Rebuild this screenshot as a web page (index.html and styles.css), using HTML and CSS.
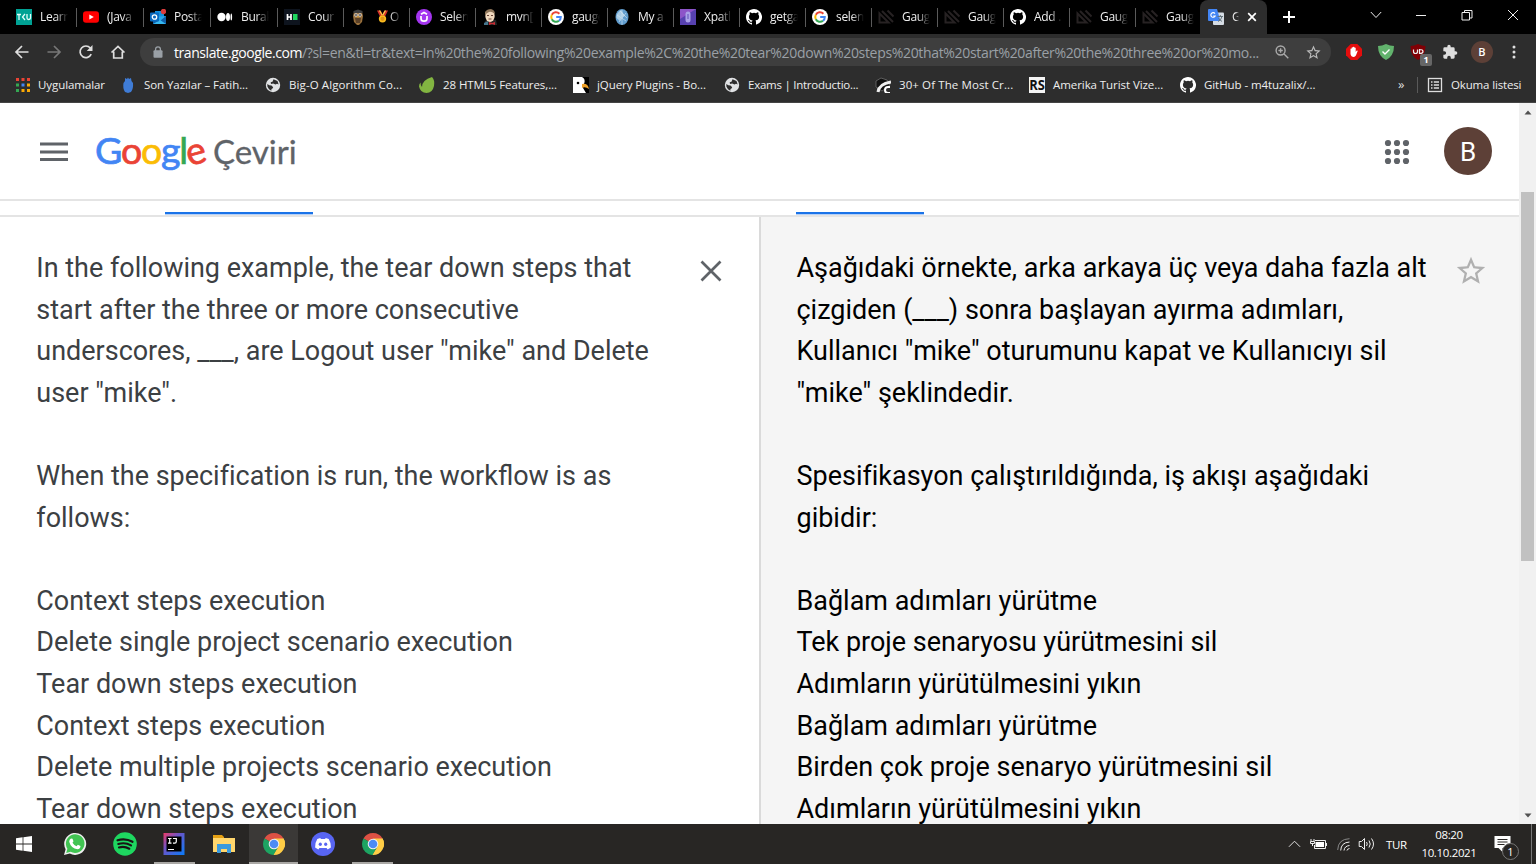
FILE: index.html
```html
<!DOCTYPE html>
<html lang="tr">
<head>
<meta charset="utf-8">
<title>Google Çeviri</title>
<link rel="stylesheet" href="styles.css">
</head>
<body>
<svg class="defs" width="0" height="0" aria-hidden="true">
  <symbol id="github" viewBox="0 0 16 16"><path fill="#fff" d="M8 0C3.58 0 0 3.58 0 8c0 3.54 2.29 6.53 5.47 7.59.4.07.55-.17.55-.38 0-.19-.01-.82-.01-1.49-2.01.37-2.53-.49-2.69-.94-.09-.23-.48-.94-.82-1.13-.28-.15-.68-.52-.01-.53.63-.01 1.08.58 1.23.82.72 1.21 1.87.87 2.33.66.07-.52.28-.87.51-1.07-1.78-.2-3.64-.89-3.64-3.95 0-.87.31-1.59.82-2.15-.08-.2-.36-1.02.08-2.12 0 0 .67-.21 2.2.82a7.6 7.6 0 0 1 4 0c1.53-1.04 2.2-.82 2.2-.82.44 1.1.16 1.92.08 2.12.51.56.82 1.27.82 2.15 0 3.07-1.87 3.75-3.65 3.95.29.25.54.73.54 1.48 0 1.07-.01 1.93-.01 2.2 0 .21.15.46.55.38A8 8 0 0 0 8 0"/></symbol>
  <symbol id="gicon" viewBox="0 0 16 16"><circle cx="8" cy="8" r="8" fill="#fff"/><g fill="none" stroke-width="2"><path stroke="#ea4335" d="M11.4 4.7A4.8 4.8 0 0 0 3.8 5.8"/><path stroke="#fbbc05" d="M3.8 5.8a4.8 4.8 0 0 0 0 4.4"/><path stroke="#34a853" d="M3.8 10.2a4.8 4.8 0 0 0 7.2 1.6"/><path stroke="#4285f4" d="M11 11.8A4.8 4.8 0 0 0 12.8 8H8.2"/></g></symbol>
  <symbol id="gauge" viewBox="0 0 16 16"><path d="M1.500 4.500V13.500H10.500zM4 2l11 11M9.500 1.500l6 6" fill="none" stroke="#272223" stroke-width="2"/></symbol>
  <symbol id="globe" viewBox="0 0 16 16"><circle cx="8" cy="8" r="7.2" fill="#e0e2e4"/><path fill="#2d2d2d" d="M8.500 2.300l4 1.700 1.200 3.500-1.700-.7-1.500.8-2.300-1-2.200.3-.3-1.600 1.800-.5zM2.300 7l2 1.200 2.200.3 1.700 1.700-.7 1.300-1 .5-.2 1.700-2.300-1.500-1.600-2.700z"/></symbol>
  <symbol id="chrome" viewBox="0 0 24 24"><path fill="#dd5144" d="M12 12L2.470 6.500a11 11 0 0 1 19.060 0z"/><path fill="#ffcd46" d="M12 12l9.530-5.500A11 11 0 0 1 12 23l-1-.05L16.500 14.500z"/><path fill="#1da462" d="M12 12l4.300 2.500L11.500 23A11 11 0 0 1 2.470 6.500z"/><path fill="#dd5144" d="M12 6.500h9.530L12 7z"/><path fill="#ffcd46" d="M12 6.500h9.530A11 11 0 0 1 22.500 15L17 12z"/><circle cx="12" cy="12" r="5.300" fill="#f2f2f2"/><circle cx="12" cy="12" r="4.300" fill="#4c8bf5"/></symbol>
  <symbol id="star" viewBox="0 0 24 24"><path d="M22 9.240l-7.190-.62L12 2 9.190 8.630 2 9.240l5.460 4.730L5.820 21 12 17.270 18.180 21l-1.630-7.030zM12 15.400l-3.760 2.270 1-4.280-3.320-2.880 4.380-.38L12 6.100l1.710 4.040 4.380.38-3.320 2.880 1 4.280z"/></symbol>
</svg>

<header class="tabstrip">
  <div class="tabs">
    <div class="tab wide"><svg viewBox="0 0 16 16"><path fill="#00a294" d="M0 0h16v16H0z"/><path stroke="#e4fffb" stroke-width="1.300" fill="none" d="M1 5.500h4M3 5.500V11M9 5L6.500 8 9 11M11 5v4q0 1.500 1.600 1.500T14.500 9V5"/></svg><span>Learn</span></div>
    <div class="tab wide"><svg viewBox="0 0 16 16"><rect y="2.300" width="16" height="11.400" rx="3" fill="#f00"/><path fill="#fff" d="M6.300 5.500v5L10.800 8z"/></svg><span>(Java</span></div>
    <div class="tab wide"><svg viewBox="0 0 16 16"><path fill="#1490df" d="M5 2h9v8H5z"/><path fill="#28a8ea" d="M3 8l13-1v8H3z"/><path fill="#0f5ea8" d="M3 8l7 4 6-5v8H3z"/><path fill="#35b8f1" d="M3 15l7-4 6 4z"/><rect y="3.500" width="9" height="9" rx="1" fill="#0a6abf"/><circle cx="4.500" cy="8" r="2.200" fill="none" stroke="#fff" stroke-width="1.300"/><circle cx="13.500" cy="2.500" r="2.700" fill="#db3c3c"/></svg><span>Posta</span></div>
    <div class="tab wide"><svg viewBox="0 0 16 16" fill="#fff"><circle cx="4.500" cy="8" r="4.200"/><ellipse cx="11" cy="8" rx="2" ry="3.900"/><ellipse cx="14.300" cy="8" rx=".8" ry="3.500"/></svg><span>Burak</span></div>
    <div class="tab"><svg viewBox="0 0 16 16"><path fill="#0e141e" d="M0 0h16v16H0z"/><path d="M3.500 5v6M7 5v6M3.500 8H7" stroke="#fff" stroke-width="1.700"/><path fill="#1ed760" d="M9 5h4.500v6H9z"/></svg><span>Cour</span></div>
    <div class="tab"><svg viewBox="0 0 16 16"><path fill="#9a713d" d="M4 3l4-1 4 1 1 4-1 6-3 3H7l-3-3-1-6z"/><path fill="#3c3c3c" d="M3.500 2L8 .5 12.500 2v2h-9z"/><circle cx="6" cy="6" r="1.700" fill="#ddd"/><circle cx="10" cy="6" r="1.700" fill="#ddd"/><circle cx="6" cy="6" r=".8"/><circle cx="10" cy="6" r=".8"/><path fill="#5b4229" d="M5 9h6l-1 5H6z"/><path fill="#d8a33c" d="M7 7h2l-1 2z"/></svg><span class="medal"><svg viewBox="0 0 12 14"><path fill="#d8322b" d="M0 0h4l2 4 2-4h4L8.500 7h-5z"/><path fill="#f8d04c" d="M2 0h1.500l3 5H5zM10 0H8.500l-3 5H7z"/><circle cx="6" cy="9" r="4" fill="#fbbc1f"/><circle cx="6" cy="9" r="2.300" fill="#df9414"/></svg>O</span></div>
    <div class="tab"><svg viewBox="0 0 16 16"><circle cx="8" cy="8" r="8" fill="#a435f0"/><path fill="none" stroke="#fff" stroke-width="1.700" d="M5 7v2.500a3 2.700 0 0 0 6 0V7M5 5.300l3-1.700 3 1.700"/></svg><span>Selen</span></div>
    <div class="tab"><svg viewBox="0 0 16 16"><path fill="#252525" d="M3 12l5-2 6 1 1 5H2z"/><ellipse cx="8" cy="7" rx="4.700" ry="6" fill="#efd7bd"/><path fill="#8f765b" d="M3 7V3q2-3 6-3 4 1 4 5-4-3-6-2-3 1-4 4z"/><path d="M5 6.500h2M9 6.500h2M6.500 10h3" stroke="#684438"/><path fill="#c92c34" d="M7 13l3 1 3-1v3l-3-1-3 1z"/><path fill="#46768e" d="M2 14l4-2v4H2z"/></svg><span>mvn[</span></div>
    <div class="tab"><svg><use href="#gicon"/></svg><span>gauge</span></div>
    <div class="tab"><svg viewBox="0 0 16 16"><ellipse cx="8" cy="8" rx="6.500" ry="8" fill="#619dce"/><path fill="#a9cce5" d="M7 1Q2 4 2.500 9l3.500 3 2-4 3-1z"/><path d="M3 6l9 6M6 2l7 7M12 4l-7 9M8 1v15" stroke="#d3e6f3" stroke-width=".6"/></svg><span>My a</span></div>
    <div class="tab"><svg viewBox="0 0 16 16"><path fill="#5741b0" d="M0 0h16v16H0z"/><path fill="#8d54c8" d="M0 0h16L0 10z"/><rect x="5.500" y="2.500" width="5" height="11" rx="2.500" fill="#aaa1e8"/><path d="M8 5v5" stroke="#614db7"/></svg><span>Xpatl</span></div>
    <div class="tab"><svg><use href="#github"/></svg><span>getga</span></div>
    <div class="tab"><svg><use href="#gicon"/></svg><span>selen</span></div>
    <div class="tab"><svg><use href="#gauge"/></svg><span>Gaug</span></div>
    <div class="tab"><svg><use href="#gauge"/></svg><span>Gaug</span></div>
    <div class="tab"><svg><use href="#github"/></svg><span>Add .</span></div>
    <div class="tab"><svg><use href="#gauge"/></svg><span>Gaug</span></div>
    <div class="tab last"><svg><use href="#gauge"/></svg><span>Gaug</span></div>
    <div class="tab active"><svg viewBox="0 0 16 16"><rect x="5" y="3.500" width="11" height="12.500" rx="1" fill="#d5dce4"/><path fill="#4285f4" d="M1 0h8l3.500 12H1q-1 0-1-1V1q0-1 1-1z"/><path d="M9.500 7.500H15M12.300 6v1.500M14 7.500q-1 4-4 5M10.500 9.500l3.500 3" stroke="#64747a" fill="none"/><path d="M7 4.600A2.300 2.300 0 1 0 7.200 7H5.200" stroke="#fff" stroke-width="1.100" fill="none"/></svg><span>G</span><svg class="close" viewBox="0 0 10 10"><path d="M1.200 1.200l7.600 7.600M8.800 1.200L1.200 8.800" stroke="#fff" stroke-width="1.700"/></svg></div>
  </div>
  <svg class="plus" viewBox="0 0 12 12"><path d="M6 0v12M0 6h12" stroke="#fff" stroke-width="2"/></svg>
  <div class="window-buttons">
    <svg viewBox="0 0 12 12"><path d="M.8 3L6 8.500 11.200 3"/></svg>
    <svg viewBox="0 0 12 12"><path d="M1 6.500h10"/></svg>
    <svg viewBox="0 0 12 12"><path d="M1 3.500h7.500V11H1zM3.500 3.500v-2H11V9H8.500"/></svg>
    <svg viewBox="0 0 12 12"><path d="M1 1l10 10M11 1L1 11"/></svg>
  </div>
</header>

<div class="toolbar">
  <div class="nav">
    <svg viewBox="0 0 16 16"><path d="M14.500 8H2M8 2L2 8l6 6"/></svg>
    <svg class="dim" viewBox="0 0 16 16"><path d="M1.500 8H14M8 2l6 6-6 6"/></svg>
    <svg viewBox="0 0 16 16"><path d="M13.200 10.200A5.800 5.800 0 1 1 12.300 4l1 1.300"/><path d="M14.500 1v6H8.700z" fill="#dedede" stroke="none"/></svg>
    <svg viewBox="0 0 16 16"><path d="M1.500 8.500L8 2.500l6.500 6M3.700 7.500V14h8.600V7.500"/></svg>
  </div>
  <div class="omnibox">
    <svg class="lock" viewBox="0 0 10 12"><rect x=".5" y="4.200" width="9" height="7.500" rx="1" fill="#9aa0a6"/><path d="M2.600 5V3.200a2.400 2.400 0 0 1 4.800 0V5" fill="none" stroke="#9aa0a6" stroke-width="1.300"/></svg>
    <div class="url"><b>translate.google.com</b>/?sl=en&amp;tl=tr&amp;text=In%20the%20following%20example%2C%20the%20tear%20down%20steps%20that%20start%20after%20the%20three%20or%20mo...</div>
    <svg class="loupe" viewBox="0 0 14 14"><path d="M9 9l4.300 4.300M3.400 5.500h4.400M5.600 3.300v4.400" /><circle cx="5.600" cy="5.500" r="4.500"/></svg>
    <svg class="fav"><use href="#star"/></svg>
  </div>
  <div class="extensions">
    <svg viewBox="0 0 16 16"><path fill="#e40d0d" d="M4.700 0h6.600L16 4.700v6.600L11.300 16H4.700L0 11.300V4.700z"/><path fill="#fff" d="M4.500 9V4.800q.8-.6 1.200 0V3.600q.7-.6 1.300 0V3q.8-.6 1.400 0v.8q.8-.5 1.300.2V8l1-1.400q1-.3 1 .5l-1.800 4.500Q9 13 7.800 13 5 13 4.500 10z"/></svg>
    <svg viewBox="0 0 16 16"><path fill="#62b36d" d="M8 0q4 2 8 2 0 10-8 14Q0 12 0 2q4 0 8-2"/><path d="M4.500 7.500L7 10l4.500-4.500" fill="none" stroke="#fff" stroke-width="1.400"/></svg>
    <div class="ublock"><svg viewBox="0 0 16 16"><path fill="#800005" d="M8 0q4 2 7.500 2 0 10-7.500 14Q.5 12 .5 2 4 2 8 0"/><path fill="none" stroke="#eee" stroke-width="1.200" d="M3.500 5.500v2q0 2 2 2t2-2v-2M9.500 5v4.500q3.500 0 3.500-2t-3.500-2"/></svg><span>1</span></div>
    <svg viewBox="0 0 24 24"><path fill="#dedede" d="M20.500 11H19V7a2 2 0 0 0-2-2h-4V3.500a2.500 2.500 0 0 0-5 0V5H4a2 2 0 0 0-2 2v3.800h1.500a2.700 2.700 0 0 1 0 5.400H2V20c0 1.100.9 2 2 2h3.800v-1.500a2.700 2.700 0 0 1 5.400 0V22H17a2 2 0 0 0 2-2v-4h1.500a2.500 2.500 0 0 0 0-5z"/></svg>
    <span class="mini-avatar">B</span>
    <svg viewBox="0 0 16 16" fill="#dedede"><circle cx="8" cy="3" r="1.500"/><circle cx="8" cy="8" r="1.500"/><circle cx="8" cy="13" r="1.500"/></svg>
  </div>
</div>

<nav class="bookmarks">
  <div class="bm apps"><svg viewBox="0 0 16 16"><path fill="#e94435" d="M1 1h3v3H1zM6.500 1h3v3h-3zM12 1h3v3h-3z"/><path fill="#34a853" d="M1 6.500h3v3H1zM1 12h3v3H1z"/><path fill="#4285f4" d="M6.500 6.500h3v3h-3z"/><path fill="#fbaa05" d="M12 6.500h3v3h-3zM6.500 12h3v3h-3zM12 12h3v3h-3z"/></svg><span>Uygulamalar</span></div>
  <div class="bm"><svg viewBox="0 0 16 16"><path fill="#3f7cd6" d="M5 1l2 1 1-1.500L9 2l2-1 .5 3 1.500 2q.5 6-2 9l-3 1-3-1Q2.500 11 3.500 6L5 4z"/></svg><span>Son Yazılar – Fatih...</span></div>
  <div class="bm"><svg><use href="#globe"/></svg><span class="roomy">Big-O Algorithm Co...</span></div>
  <div class="bm"><svg viewBox="0 0 16 16"><path fill="#82b541" d="M13 0q3 3 2 9-1.500 7-7.500 7T0 9.500q0-2.500 1.500-4 0 3 1.500 4.500Q3 3 13 0"/></svg><span>28 HTML5 Features,...</span></div>
  <div class="bm"><svg viewBox="0 0 16 16"><path d="M0 0h16v16H0z"/><path fill="#fff" d="M0 0h9q4 2 2 7l-1 4 3 5H0z"/><circle cx="5" cy="6" r="1.300"/><path fill="#efa027" d="M9 7q6-1 7 5-4-3-7-1z"/></svg><span>jQuery Plugins - Bo...</span></div>
  <div class="bm"><svg><use href="#globe"/></svg><span class="snug">Exams | Introductio...</span></div>
  <div class="bm"><svg viewBox="0 0 16 16"><path fill="#111" stroke="#777" stroke-width=".7" d="M1 4l5-3 6 2 3 5-8 6-6-4z"/><path d="M3 15Q4 7 16 5" fill="none" stroke="#eee" stroke-width="3"/><path d="M15 10h-2q-3 0-3 3t3 3h2" fill="none" stroke="#fff" stroke-width="2"/></svg><span class="roomy">30+ Of The Most Cr...</span></div>
  <div class="bm"><svg viewBox="0 0 16 16"><path fill="#f4f4f4" d="M0 0h16v16H0z"/><text class="rs" x=".3" y="13" textLength="15.500" lengthAdjust="spacingAndGlyphs">RS</text></svg><span>Amerika Turist Vize...</span></div>
  <div class="bm"><svg><use href="#github"/></svg><span>GitHub - m4tuzalix/...</span></div>
  <div class="more">»</div>
  <div class="bm reading"><svg viewBox="0 0 16 16"><rect x="1.500" y="1.500" width="13" height="13" fill="none" stroke="#dedede" stroke-width="1.300"/><path d="M4 5h1.500M4 8h1.500M4 11h1.500M6.800 5H12M6.800 8H12M6.800 11H12" stroke="#dedede" stroke-width="1.300"/></svg><span>Okuma listesi</span></div>
</nav>

<div class="viewport">
  <main class="page">
    <header class="masthead">
      <svg class="menu" viewBox="0 0 28 20"><path d="M0 2h28M0 10h28M0 17.500h28" stroke="#5f6368" stroke-width="3"/></svg>
      <div class="logo"><span class="google"><i class="b">G</i><i class="r">o</i><i class="y">o</i><i class="b">g</i><i class="g">l</i><i class="r tilt">e</i></span><span class="product">Çeviri</span></div>
      <svg class="launcher" viewBox="0 0 26 26" fill="#5f6368"><circle cx="4" cy="4" r="3.100"/><circle cx="13" cy="4" r="3.100"/><circle cx="22" cy="4" r="3.100"/><circle cx="4" cy="13" r="3.100"/><circle cx="13" cy="13" r="3.100"/><circle cx="22" cy="13" r="3.100"/><circle cx="4" cy="22" r="3.100"/><circle cx="13" cy="22" r="3.100"/><circle cx="22" cy="22" r="3.100"/></svg>
      <span class="avatar">B</span>
    </header>
    <div class="language-bar"><i class="src-mark"></i><i class="dst-mark"></i></div>
    <div class="panes">
      <section class="pane source">
        <p>In the following example, the tear down steps that<br>start after the three or more consecutive<br>underscores, ___, are Logout user "mike" and Delete<br>user "mike".<br><br>When the specification is run, the workflow is as<br>follows:<br><br>Context steps execution<br>Delete single project scenario execution<br>Tear down steps execution<br>Context steps execution<br>Delete multiple projects scenario execution<br>Tear down steps execution</p>
        <svg class="clear" viewBox="0 0 22 22"><path d="M1.500 1.500l19 19M20.500 1.500l-19 19" stroke="#5f6368" stroke-width="2.700"/></svg>
      </section>
      <section class="pane target">
        <p>Aşağıdaki örnekte, arka arkaya üç veya daha fazla alt<br>çizgiden (___) sonra başlayan ayırma adımları,<br>Kullanıcı "mike" oturumunu kapat ve Kullanıcıyı sil<br>"mike" şeklindedir.<br><br>Spesifikasyon çalıştırıldığında, iş akışı aşağıdaki<br>gibidir:<br><br>Bağlam adımları yürütme<br>Tek proje senaryosu yürütmesini sil<br>Adımların yürütülmesini yıkın<br>Bağlam adımları yürütme<br>Birden çok proje senaryo yürütmesini sil<br>Adımların yürütülmesini yıkın</p>
        <svg class="save"><use href="#star"/></svg>
      </section>
    </div>
  </main>
  <aside class="scrollbar">
    <svg viewBox="0 0 8 5"><path d="M.5 4.500L4 .5l3.500 4z"/></svg>
    <div class="thumb"></div>
    <svg viewBox="0 0 8 5"><path d="M.5.500h7L4 4.500z"/></svg>
  </aside>
</div>

<footer class="taskbar">
  <div class="start"><svg viewBox="0 0 16 16"><path fill="#fff" d="M0 2.200L6.600 1.300v6.300H0zM7.400 1.200L16 0v7.600H7.400zM0 8.400h6.600v6.300L0 13.800zM7.400 8.400H16V16l-8.600-1.200z"/></svg></div>
  <div class="apps-row">
    <div class="app"><svg viewBox="0 0 24 24"><path fill="#eee" d="M1 23l1.600-5.700A11 11 0 1 1 6.800 21.500z"/><path fill="#41c452" d="M3.200 20.900l1.200-4.200A9.300 9.300 0 1 1 7.600 19.700z"/><path fill="#fff" d="M8 6.500l1.500.3 1 2.500-1 1.400q1.500 2.500 4 3.500l1.400-1.400 2.600 1.300q0 3-3 3.200Q8 16.500 6.200 9.800 6.200 7.300 8 6.500"/></svg></div>
    <div class="app"><svg viewBox="0 0 24 24"><circle cx="12" cy="12" r="11.800" fill="#1ed760"/><path d="M4.500 8.300q8-2.300 15 1.500M5.300 12q7-2 12.700 1.400M6 15.500q5.500-1.500 10.300 1.200" fill="none" stroke="#191414" stroke-width="2.200" stroke-linecap="round"/></svg></div>
    <div class="app running"><svg viewBox="0 0 24 24"><defs><linearGradient id="ij" x1="0" y1="0" x2="1" y2="1"><stop offset="0" stop-color="#ee3b67"/><stop offset=".4" stop-color="#6a55c7"/><stop offset="1" stop-color="#087cfa"/></linearGradient></defs><path fill="url(#ij)" d="M1.500 1h21v22h-21z"/><path fill="#000" d="M4.500 4.500h15v15h-15z"/><path d="M6 6.500h3.500M7.700 6.500v4.500M6 11.200h3.500M11 6.500h3.300v3q0 1.700-1.500 1.700H11M6 17.500h6" fill="none" stroke="#fff" stroke-width="1.200"/></svg></div>
    <div class="app"><svg viewBox="0 0 24 24"><path fill="#e5a013" d="M1 3h9l2 2v5H1z"/><path fill="#ffd66d" d="M1 6h22v14H1z"/><path fill="#3a9ade" d="M5 12h14v9h-4v-4H9v4H5z"/></svg></div>
    <div class="app running focused"><svg><use href="#chrome"/></svg></div>
    <div class="app"><svg viewBox="0 0 24 24"><circle cx="12" cy="12" r="12" fill="#5865f2"/><path fill="#fff" d="M9.300 6l.6 1h4.200l.6-1 3 1q2.500 4 2.200 8.500l-3.300 2-1-1.600H8.400l-1 1.600-3.300-2Q3.800 11 6.300 7z"/><ellipse cx="9.300" cy="12.200" rx="1.600" ry="1.800" fill="#5865f2"/><ellipse cx="14.700" cy="12.200" rx="1.600" ry="1.800" fill="#5865f2"/></svg></div>
    <div class="app running"><svg><use href="#chrome"/></svg></div>
  </div>
  <div class="tray">
    <svg class="caret" viewBox="0 0 14 8"><path d="M1 7l6-6 6 6"/></svg>
    <svg class="battery" viewBox="0 0 17 12"><path fill="#fff" stroke="none" d="M5.500 4H14v5H5.500z"/><path d="M5 2.500h10.500v8h-11V7M16.500 5v3M1 1v2.500M4 1v2.500M.5 3.500h4v2h-4zM2.500 5.500V8"/></svg>
    <svg class="wifi" viewBox="0 0 13 13"><path stroke="#888" d="M.7 12Q1 1 12.500.7"/><path d="M3.700 12.500Q4 4.500 12.500 4M7 12.500q.5-4.500 5.500-5M10 12.500q0-1.500 2.500-2"/></svg>
    <svg class="volume" viewBox="0 0 17 14"><path d="M.7 4.500H3l3-3v11l-3-3H.7zM8 5q1.500 2 0 4M10.500 3.500q2.500 3.500 0 7M13 1.500q4 5.500 0 11"/></svg>
    <span class="lang">TUR</span>
    <div class="clock"><span>08:20</span><span>10.10.2021</span></div>
    <div class="notice"><svg viewBox="0 0 16 16"><path fill="#fff" d="M0 0h16v12H8v4l-4-4H0z"/><path d="M3 3.500h10M3 6h10M3 8.500h7" stroke="#282624"/></svg><span>1</span></div>
    <i class="peek"></i>
  </div>
</footer>
</body>
</html>
```

FILE: styles.css
```css
* { box-sizing: border-box; }
body { margin: 0; width: 1536px; height: 864px; overflow: hidden; display: flex; flex-direction: column; background: #fff; font-family: "Open Sans", "Noto Sans", sans-serif; }
svg { flex: none; display: block; }
.defs { position: absolute; }

/* Tabs */
.tabstrip { height: 34px; background: #000; display: flex; flex: none; }
.tabs { display: flex; padding-left: 10px; }
.tab { width: 66px; height: 34px; padding-left: 6px; display: flex; align-items: center; gap: 8px; background: linear-gradient(#5a5a5a, #5a5a5a) right 8px / 1px 19px no-repeat; }
.wide { width: 67px; }
.tab > svg { width: 16px; height: 16px; }
.tab > span { width: 28px; overflow: hidden; white-space: nowrap; color: #eee; font-size: 12px; letter-spacing: -.3px; line-height: 20px; -webkit-mask-image: linear-gradient(90deg, #000 55%, transparent); mask-image: linear-gradient(90deg, #000 55%, transparent); }
.tab > .medal { display: flex; align-items: center; gap: 2px; width: 24px; margin-left: 3px; }
.medal svg { width: 11px; height: 14px; }
.last { width: 64px; background: none; }
.tab.active { width: 67px; padding-left: 8px; background: #2d2d2d; border-radius: 8px 8px 0 0; }
.active > span { width: 7px; }
.tab > .close { width: 10px; height: 10px; }
.plus { width: 12px; height: 12px; margin: 11px 0 0 16px; }
.window-buttons { display: flex; gap: 33.800px; margin: 9px 17px 0 auto; }
.window-buttons svg { width: 12px; height: 12px; fill: none; stroke: #eee; stroke-width: 1; }

/* Toolbar */
.toolbar { height: 36px; flex: none; background: #2d2d2d; display: flex; align-items: center; padding-left: 14px; }
.nav { display: flex; gap: 16px; }
.nav svg { width: 16px; height: 16px; fill: none; stroke: #dedede; stroke-width: 1.700; }
.nav .dim { stroke: #777; }
.omnibox { width: 1191px; height: 28px; margin-left: 14px; padding: 0 9px 0 13px; border-radius: 14px; background: #3e3e3e; display: flex; align-items: center; }
.lock { width: 10px; height: 12px; }
.url { width: 1092px; margin-left: 11px; padding-top: 1px; white-space: nowrap; color: #9aa0a6; font-size: 14px; letter-spacing: -.33px; line-height: 22px; }
.url b { color: #fff; font-weight: 400; letter-spacing: -.44px; }
.loupe { width: 14px; height: 14px; margin-left: 9px; fill: none; stroke: #aaa; stroke-width: 1.400; }
.fav { width: 17px; height: 17px; margin-left: auto; fill: #bbb; }
.extensions { display: flex; gap: 16px; margin-left: 15px; align-items: center; }
.extensions svg { width: 16px; height: 16px; }
.ublock { position: relative; width: 16px; height: 16px; }
.ublock span { position: absolute; left: 10px; top: 10px; width: 12px; height: 12px; background: #666; color: #fff; border-radius: 2px; font-size: 9px; font-weight: 700; line-height: 12px; text-align: center; }
.mini-avatar { width: 22px; height: 22px; margin: 0 -3px; border-radius: 50%; background: #5d4037; color: #fff; font-size: 11px; font-weight: 600; line-height: 22px; text-align: center; }

/* Bookmarks */
.bookmarks { height: 33px; flex: none; padding: 0 0 3px 15px; background: #2d2d2d; border-bottom: 1px solid #444; display: grid; grid-template-columns: 105px 145px 154px 154px 151px 151px 154px 151px 218px 19px 1fr; align-items: center; }
.bm { display: flex; align-items: center; gap: 8px; color: #eee; font-size: 11.500px; letter-spacing: -.07px; white-space: nowrap; line-height: 20px; }
.bm svg { width: 16px; height: 16px; }
.roomy { letter-spacing: .1px; }
.snug { letter-spacing: -.25px; }
.apps { gap: 7px; }
.rs { font: 700 14px "Open Sans", sans-serif; fill: #111; }
.more { color: #ddd; font-size: 13px; height: 20px; line-height: 18px; }
.reading { height: 16px; padding-left: 9px; border-left: 1px solid #5a5a5a; letter-spacing: -.15px; }

/* Page */
.viewport { display: flex; height: 721px; flex: none; }
.page { width: 1519px; display: flex; flex-direction: column; }
.masthead { height: 98px; flex: none; border-bottom: 2px solid #e4e4e4; display: flex; align-items: center; padding: 0 27px 0 40px; }
.menu { width: 28px; height: 20px; margin-top: 1px; }
.logo { display: flex; align-items: baseline; margin: -2px 0 0 27px; font-family: Lato, sans-serif; line-height: 48px; }
.google { font-size: 37.500px; letter-spacing: -1.300px; width: 118px; -webkit-text-stroke: .7px; }
.google i { display: inline-block; font-style: normal; }
.tilt { transform: rotate(-15deg); transform-origin: 50% 63%; }
.b { color: #4285f4; } .r { color: #ea4335; } .y { color: #fbbc04; } .g { color: #34a853; }
.product { font-size: 33px; color: #5f6368; -webkit-text-stroke: .3px; }
.launcher { width: 26px; height: 26px; margin: 1px 0 0 auto; }
.avatar { width: 48px; height: 48px; margin-left: 34.500px; border-radius: 50%; background: #5d4037; color: #fff; font: 26px/50px Roboto, sans-serif; text-align: center; }
.language-bar { height: 16px; flex: none; border-bottom: 2px solid #e4e4e4; display: flex; align-items: flex-end; }
.language-bar i { height: 3px; background: linear-gradient(#1a73e8 66%, #b5d0f7 66%); }
.src-mark { width: 148px; margin-left: 165px; }
.dst-mark { width: 128px; margin-left: 483px; }
.panes { display: flex; flex: 1; min-height: 0; overflow: hidden; }
.pane { display: flex; justify-content: space-between; padding-top: 30px; font-family: Roboto, sans-serif; font-size: 26.980px; line-height: 41.600px; white-space: nowrap; }
.pane p { margin: 0; padding-top: 1px; }
.source { width: 761px; padding-left: 36.300px; padding-right: 37px; border-right: 2px solid #dadada; color: #3c4043; }
.target { width: 758px; padding-left: 35.500px; padding-right: 31px; background: #f5f5f5; color: #000; }
.clear { width: 22px; height: 22px; margin-top: 13px; }
.save { width: 34px; height: 34px; margin-top: 7px; fill: #b0b0b0; }

.scrollbar { width: 17px; background: #f1f1f1; display: flex; flex-direction: column; align-items: center; padding: 7px 0 6px; }
.scrollbar svg { width: 8px; height: 5px; fill: #505050; }
.thumb { width: 13px; height: 369px; margin: 77px 0 auto; background: #c1c1c1; }

/* Taskbar */
.taskbar { height: 40px; flex: none; background: #282624; display: flex; }
.start { width: 50.500px; padding: 12px 0 0 16px; }
.start svg { width: 16px; height: 16px; }
.apps-row { display: flex; }
.app { width: 49.600px; height: 40px; padding-top: 8px; display: flex; justify-content: center; }
.app svg { width: 24px; height: 24px; }
.running { background: linear-gradient(#aaa8a5, #aaa8a5) center bottom / 41px 2px no-repeat; }
.focused { background: linear-gradient(#aaa8a5, #aaa8a5) center bottom / 49px 2px no-repeat, #3b3937; }
.tray { margin-left: auto; display: flex; align-items: center; color: #fff; }
.tray > svg { fill: none; stroke: #eee; stroke-width: 1; }
.caret { width: 13px; height: 8px; }
.battery { width: 17px; height: 12px; margin-left: 9px; }
.wifi { width: 13px; height: 13px; margin-left: 10px; }
.volume { width: 18px; height: 14px; margin-left: 8px; }
.lang { width: 23px; margin-left: 10px; font-size: 11.500px; letter-spacing: -.3px; }
.clock { width: 58px; margin-left: 11px; display: flex; flex-direction: column; align-items: center; font-size: 11.500px; line-height: 18.500px; letter-spacing: -.35px; }
.notice { position: relative; width: 36px; height: 40px; padding: 12px 0 0 16px; }
.notice svg { width: 17px; height: 16px; }
.notice span { position: absolute; left: 24px; top: 19px; width: 17px; height: 17px; border: 1px solid #777; border-radius: 50%; background: #282624; font-size: 11px; line-height: 15px; text-align: center; }
.peek { width: 1px; height: 40px; margin: 0 4px 0 17px; background: #777; }
```
